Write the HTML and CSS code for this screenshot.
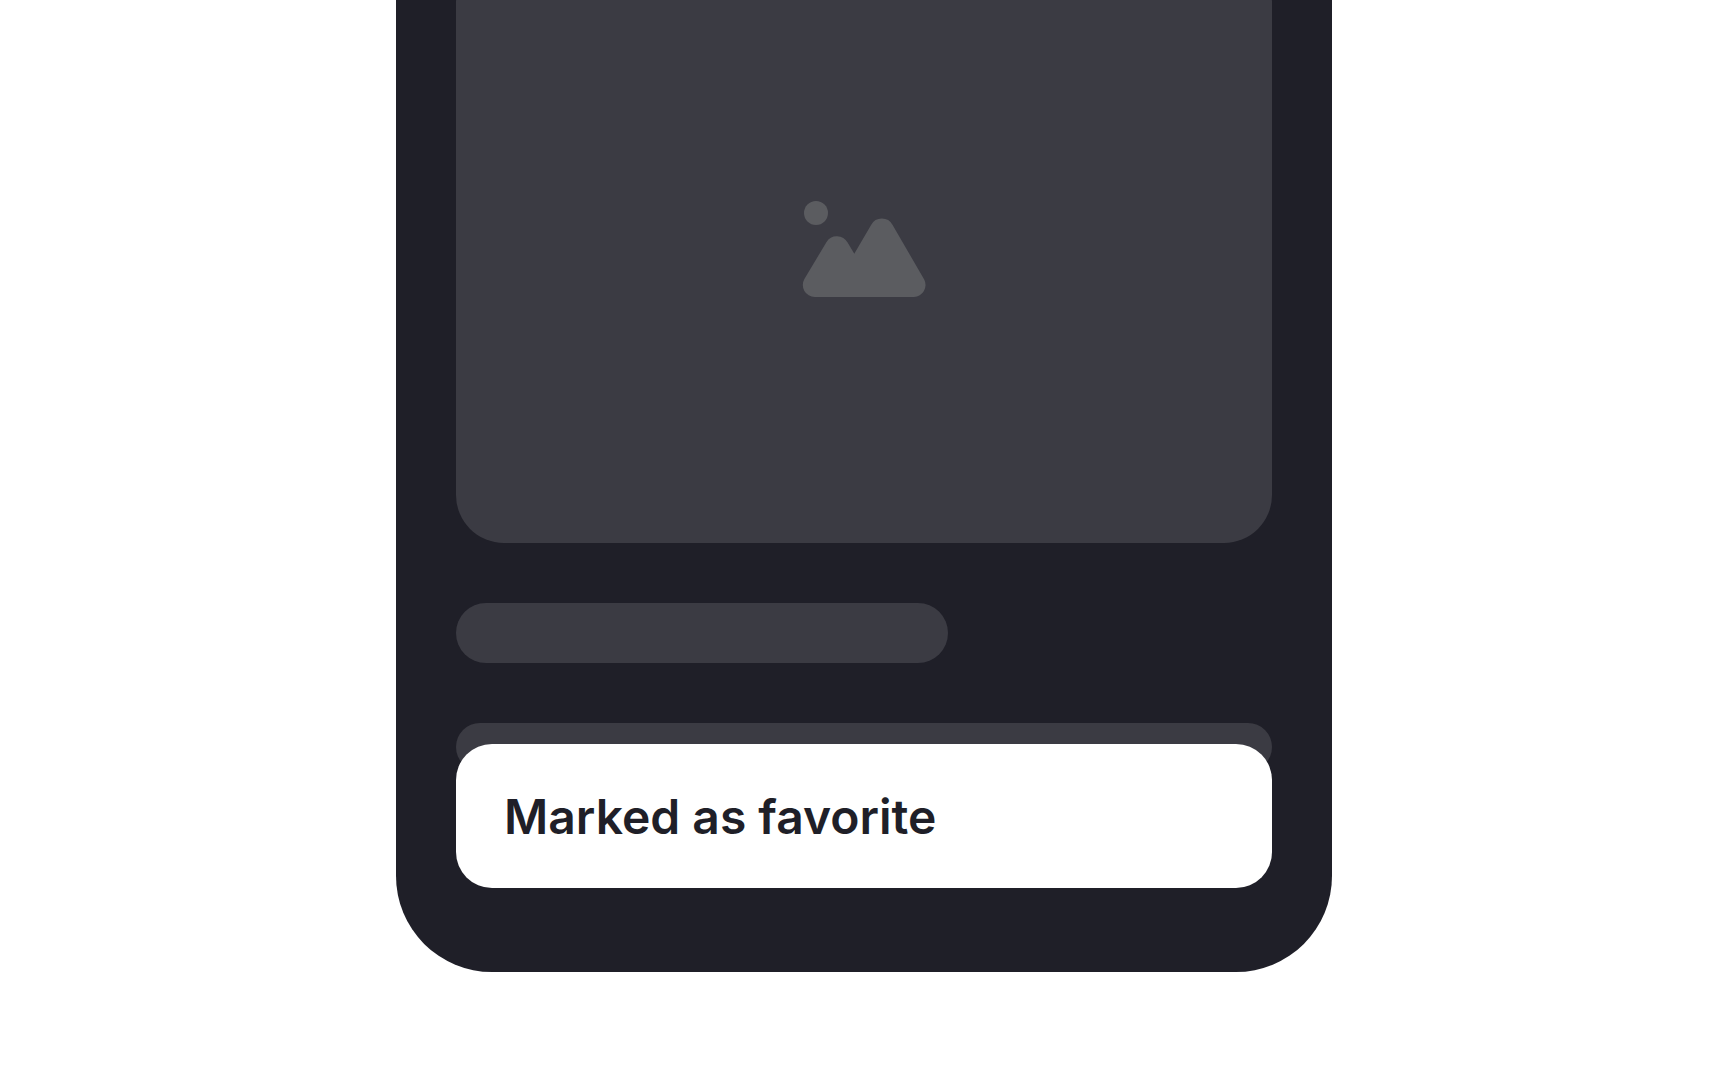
FILE: index.html
```
<!DOCTYPE html>
<html lang="en">
<head>
    <meta charset="UTF-8">
    <meta name="viewport" content="width=device-width, initial-scale=1.0">
    <title>Snackbar</title>
    <link rel="stylesheet" href="styles.css">
</head>
<body>
    <main class="phone">
        <!-- Placeholder content -->
        <div class="media">
            <svg class="media-icon" viewBox="0 0 124 98" aria-hidden="true">
                <circle cx="14" cy="13" r="12"/>
                <path d="M2.4 79 L24.4 42.2 A12.2 12.2 0 0 1 45.6 42.6 L52.3 53.8 L69.1 25 A12.2 12.2 0 0 1 90.6 25 L122.2 79.5 A12 12 0 0 1 112 97 H12.7 A12 12 0 0 1 2.4 79 Z"/>
            </svg>
        </div>
        <div class="line line-title"></div>
        <div class="line"></div>

        <!-- Snackbar -->
        <div class="snackbar" role="status">Marked as favorite</div>
    </main>
</body>
</html>
```
FILE: styles.css
```
* {
    margin: 0;
    padding: 0;
    box-sizing: border-box;
}

body {
    display: flex;
    flex-direction: column;
    align-items: center;
    justify-content: flex-end;
    height: 100vh;
    padding-bottom: 108px;
    overflow: hidden;
    font-family: Inter, sans-serif;
    background-color: #fff;
    color: #1f1f28;
}

.phone {
    position: relative;
    display: flex;
    flex-direction: column;
    flex-shrink: 0;
    gap: 60px;
    width: 100%;
    max-width: 936px;
    padding: 60px 60px 201px;
    border-radius: 96px;
    background-color: #1f1f28;
}

.media {
    display: flex;
    align-items: center;
    justify-content: center;
    height: 588px;
    border-radius: 48px;
    background-color: #3b3b43;
}

.media-icon {
    width: 124px;
    fill: #5b5c60;
}

.line {
    height: 48px;
    border-radius: 24px;
    background-color: #3b3b43;
}

.line-title {
    width: 492px;
    max-width: 100%;
    height: 60px;
    border-radius: 30px;
}

/* Floats over the bottom of the screen */
.snackbar {
    position: absolute;
    right: 60px;
    bottom: 84px;
    left: 60px;
    padding: 42px 48px 40px;
    border-radius: 36px;
    background-color: #fff;
    font-size: 48px;
    font-weight: 600;
    line-height: 62px;
}
```
